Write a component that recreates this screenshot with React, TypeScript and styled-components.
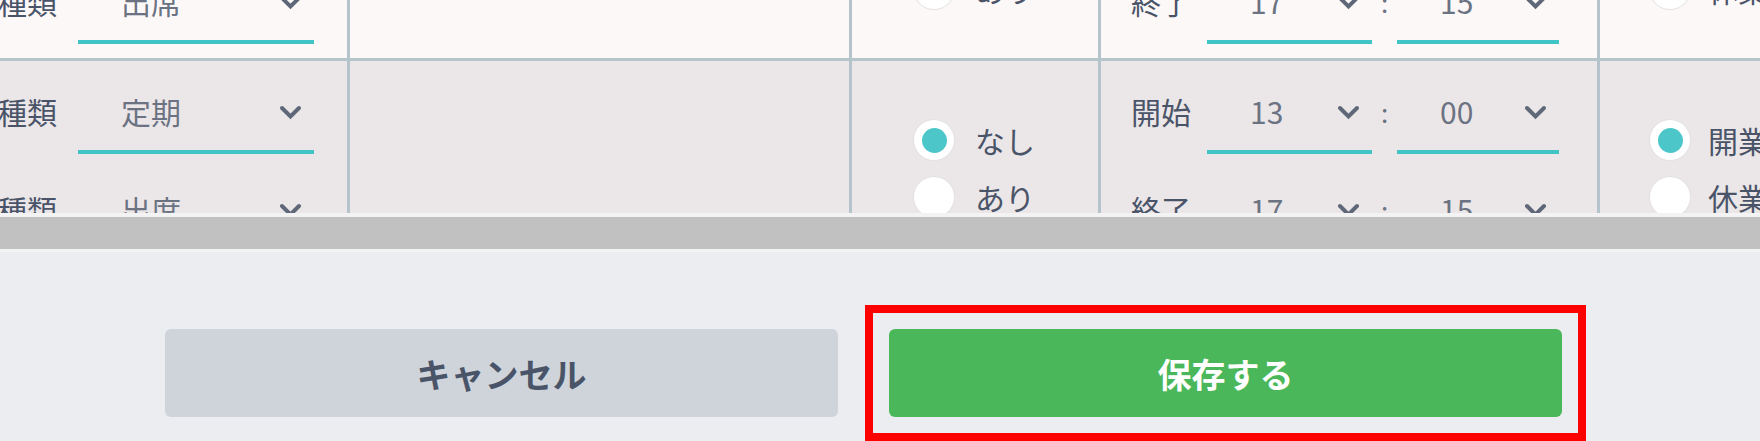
import { useLayoutEffect, useRef } from 'react';
import styled, { createGlobalStyle } from 'styled-components';

const GlobalStyle = createGlobalStyle`
  body {
    margin: 0;
    background: #ecedf0;
    font-family: 'Noto Sans CJK JP', 'Noto Sans', sans-serif;
  }
`;

const Page = styled.div`
  width: 1760px;
  height: 441px;
  overflow: hidden;
  display: flex;
  flex-direction: column;
`;

const TableViewport = styled.div`
  height: 213px;
  flex-shrink: 0;
  overflow: hidden;
`;

const Table = styled.div`
  width: max-content;
`;

const Row = styled.div<{ $shade: 'light' | 'dark' }>`
  display: grid;
  grid-template-columns: 373px 502px 249px 499px 300px;
  background: ${({ $shade }) => ($shade === 'light' ? '#fdf8f8' : '#ebe7e8')};
  border-bottom: 3px solid #b5c3cb;
`;

const Cell = styled.div<{ $padLeft?: number }>`
  box-sizing: border-box;
  border-right: 3px solid #b5c3cb;
  padding: 31px 0 14px ${({ $padLeft }) => $padLeft ?? 0}px;
  display: flex;
  flex-direction: column;
  gap: 36px;
`;

const Field = styled.div`
  display: flex;
  align-items: flex-start;
`;

const Label = styled.span<{ $space: number }>`
  width: 60px;
  flex-shrink: 0;
  margin-right: ${({ $space }) => $space}px;
  font-size: 30px;
  line-height: 38px;
  color: #4a5468;
  white-space: nowrap;
`;

const Select = styled.div<{ $width: number }>`
  box-sizing: border-box;
  width: ${({ $width }) => $width}px;
  height: 62px;
  padding: 0 12px 18px 43px;
  border-bottom: 4px solid #40c4c6;
  display: flex;
  justify-content: space-between;
  align-items: flex-start;
  font-size: 30px;
  line-height: 38px;
  color: #6b7383;
  & svg {
    margin-top: 13px;
  }
`;

const Colon = styled.span`
  width: 25px;
  text-align: center;
  font-size: 26px;
  line-height: 40px;
  color: #6b7383;
`;

const RadioGroup = styled.div`
  margin-top: 28px;
  display: flex;
  flex-direction: column;
  gap: 17px;
`;

const RadioItem = styled.label<{ $gap: number }>`
  display: flex;
  align-items: center;
  gap: ${({ $gap }) => $gap}px;
  font-size: 30px;
  line-height: 36px;
  color: #4a5468;
`;

const RadioCircle = styled.span<{ $checked?: boolean }>`
  width: 40px;
  height: 40px;
  flex-shrink: 0;
  border-radius: 50%;
  background: #fff;
  box-shadow: 0 0 0 1px #e3e1e2;
  display: flex;
  justify-content: center;
  align-items: center;
  &::after {
    content: '';
    width: 25px;
    height: 25px;
    border-radius: 50%;
    background: ${({ $checked }) => ($checked ? '#4cc6c8' : 'transparent')};
  }
`;

const ScrollTrack = styled.div`
  box-sizing: border-box;
  height: 39px;
  flex-shrink: 0;
  padding: 4px 0 3px;
  background: #f3f3f3;
`;

const ScrollThumb = styled.div`
  height: 32px;
  background: #c1c1c1;
`;

const Footer = styled.div`
  box-sizing: border-box;
  flex: 1;
  display: flex;
  align-items: center;
  gap: 27px;
  padding: 53px 0 0 165px;
  background: #ecedf0;
`;

const ActionButton = styled.button<{ $primary?: boolean }>`
  width: 673px;
  height: 88px;
  border: none;
  border-radius: 6px;
  background: ${({ $primary }) => ($primary ? '#4ab85a' : '#cfd4db')};
  color: ${({ $primary }) => ($primary ? '#fff' : '#4a5468')};
  font-family: inherit;
  font-size: 34px;
  font-weight: 700;
  cursor: pointer;
`;

const HighlightFrame = styled.div`
  border: 8px solid #ff0000;
  padding: 16px;
`;

const Chevron = () => (
  <svg width='23' height='15' viewBox='0 0 23 15' fill='none'>
    <polyline
      points='3,3 11.5,11.5 20,3'
      stroke='#5f6879'
      strokeWidth='4'
      strokeLinecap='round'
      strokeLinejoin='miter'
    />
  </svg>
);

const KindField = ({ value }: { value: string }) => (
  <Field>
    <Label $space={21}>種類</Label>
    <Select $width={236}>
      <span>{value}</span>
      <Chevron />
    </Select>
  </Field>
);

const TimeField = ({
  label,
  hour,
  minute,
}: {
  label: string;
  hour: string;
  minute: string;
}) => (
  <Field>
    <Label $space={16}>{label}</Label>
    <Select $width={165}>
      <span>{hour}</span>
      <Chevron />
    </Select>
    <Colon>:</Colon>
    <Select $width={162}>
      <span>{minute}</span>
      <Chevron />
    </Select>
  </Field>
);

const Radios = ({ options, gap }: { options: string[]; gap: number }) => (
  <RadioGroup>
    {options.map((o, index) => (
      <RadioItem key={o} $gap={gap}>
        <RadioCircle $checked={index === 0} />
        {o}
      </RadioItem>
    ))}
  </RadioGroup>
);

const rows = [
  { shade: 'light' as const, kinds: ['定期', '出席'] },
  { shade: 'dark' as const, kinds: ['定期', '出席'] },
  { shade: 'light' as const, kinds: ['定期', '出席'] },
];

const App = () => {
  const viewportRef = useRef<HTMLDivElement>(null);

  useLayoutEffect(() => {
    // the list is shown scrolled, as in the original screen
    if (viewportRef.current) {
      viewportRef.current.scrollLeft = 23;
      viewportRef.current.scrollTop = 147;
    }
  }, []);

  return (
    <Page>
      <GlobalStyle />
      <TableViewport ref={viewportRef}>
        <Table>
          {rows.map((r, index) => (
            <Row key={index} $shade={r.shade}>
              <Cell $padLeft={20}>
                {r.kinds.map((k, i) => (
                  <KindField key={i} value={k} />
                ))}
              </Cell>
              <Cell />
              <Cell $padLeft={62}>
                <Radios options={['なし', 'あり']} gap={21} />
              </Cell>
              <Cell $padLeft={30}>
                <TimeField label='開始' hour='13' minute='00' />
                <TimeField label='終了' hour='17' minute='15' />
              </Cell>
              <Cell $padLeft={50}>
                <Radios options={['開業', '休業']} gap={18} />
              </Cell>
            </Row>
          ))}
        </Table>
      </TableViewport>
      <ScrollTrack>
        <ScrollThumb />
      </ScrollTrack>
      <Footer>
        <ActionButton>キャンセル</ActionButton>
        <HighlightFrame>
          <ActionButton $primary>保存する</ActionButton>
        </HighlightFrame>
      </Footer>
    </Page>
  );
};

export default App;
